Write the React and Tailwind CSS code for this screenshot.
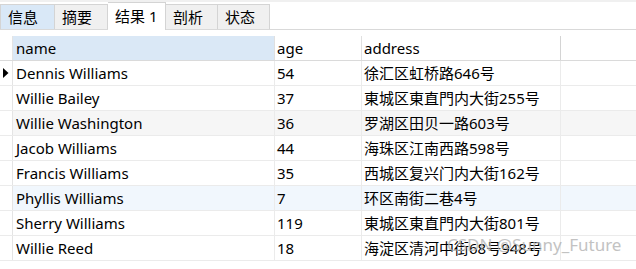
import React from "react";

const rows = [
  { name: "Dennis Williams", age: "54", address: "徐汇区虹桥路646号", bg: "bg-white", current: true },
  { name: "Willie Bailey", age: "37", address: "東城区東直門内大街255号", bg: "bg-white" },
  { name: "Willie Washington", age: "36", address: "罗湖区田贝一路603号", bg: "bg-[#f6f6f6]" },
  { name: "Jacob Williams", age: "44", address: "海珠区江南西路598号", bg: "bg-white" },
  { name: "Francis Williams", age: "35", address: "西城区复兴门内大街162号", bg: "bg-white" },
  { name: "Phyllis Williams", age: "7", address: "环区南街二巷4号", bg: "bg-[#f1f7fd]" },
  { name: "Sherry Williams", age: "119", address: "東城区東直門内大街801号", bg: "bg-white" },
  { name: "Willie Reed", age: "18", address: "海淀区清河中街68号948号", bg: "bg-white" },
];

const tabs = [
  { label: "信息", w: "w-[55px]", cls: "bg-[#d9e8f7] border-l" },
  { label: "摘要", w: "w-[53px]", cls: "bg-[#f0f0f0]" },
  { label: "结果 1", w: "w-[58px]", cls: "bg-white", active: true },
  { label: "剖析", w: "w-[52px]", cls: "bg-[#f0f0f0]" },
  { label: "状态", w: "w-[52px]", cls: "bg-[#f0f0f0]" },
];

export default function App() {
  return (
    <div
      className="relative w-[636px] h-[269px] bg-white overflow-hidden text-[15px] text-[#000]"
      style={{ fontFamily: '"Noto Sans", "Noto Sans CJK SC", sans-serif' }}
    >
      <div className="h-[2px] bg-[#f0f0f0]" />
      <div className="h-[28px] flex items-end border-b border-[#d9d9d9]">
        {tabs.map((t) =>
          t.active ? (
            <div
              key={t.label}
              className={`${t.w} h-[28px] -mb-px bg-white border-t border-r border-[#d4d4d4] pl-[7px] flex items-center leading-none`}
            >
              {t.label}
            </div>
          ) : (
            <div
              key={t.label}
              className={`${t.w} h-[25px] ${t.cls} border-t border-r border-[#d4d4d4] pl-[7px] flex items-center leading-none pt-[1px]`}
            >
              {t.label}
            </div>
          )
        )}
      </div>

      <div className="mt-[6px]">
        <div className="flex h-[25px] border-b border-[#dadada]">
          <div className="w-[13px] border-r border-[#e4e4e4]" />
          <div className="w-[262px] border-r border-[#e0e0e0] bg-[#dae8f6] pl-[3px] flex items-center">name</div>
          <div className="w-[87px] border-r border-[#e0e0e0] pl-[2px] flex items-center">age</div>
          <div className="w-[199px] border-r border-[#d4d4d4] pl-[2px] flex items-center">address</div>
        </div>
        {rows.map((r) => (
          <div key={r.name} className={`flex h-[25px] border-b border-[#ebebeb] ${r.bg}`}>
            <div className="w-[13px] border-r border-[#e4e4e4] bg-white flex items-center">
              {r.current && (
                <svg width="6" height="10" viewBox="0 0 6 10" className="ml-[3px]">
                  <path d="M0 0 L5.5 5 L0 10 Z" fill="#000" />
                </svg>
              )}
            </div>
            <div className="w-[262px] border-r border-[#ebebeb] pl-[3px] flex items-center whitespace-nowrap">{r.name}</div>
            <div className="w-[87px] border-r border-[#ebebeb] pl-[2px] flex items-center">{r.age}</div>
            <div className="w-[199px] border-r border-[#ebebeb] pl-[2px] flex items-center whitespace-nowrap">{r.address}</div>
          </div>
        ))}
      </div>

      <div className="absolute left-[447px] top-[236px] text-[17px] leading-none text-[#b4b4b4] opacity-80 whitespace-nowrap">
        CSDN @Sunny_Future
      </div>
    </div>
  );
}
